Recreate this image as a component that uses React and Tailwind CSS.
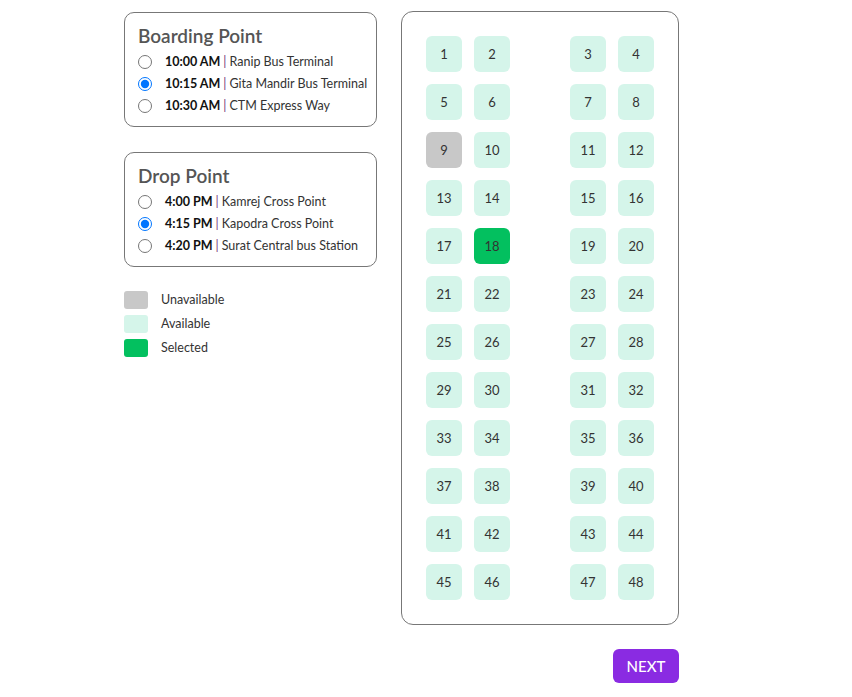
import React, { useState } from 'react';

const boarding = [
  { time: '10:00 AM', place: 'Ranip Bus Terminal' },
  { time: '10:15 AM', place: 'Gita Mandir Bus Terminal' },
  { time: '10:30 AM', place: 'CTM Express Way' },
];

const drops = [
  { time: '4:00 PM', place: 'Kamrej Cross Point' },
  { time: '4:15 PM', place: 'Kapodra Cross Point' },
  { time: '4:20 PM', place: 'Surat Central bus Station' },
];

const unavailable = [9];

const PointBox = ({ title, name, items, picked, onPick }) => (
  <div className="border border-[#777] rounded-[10px] px-[13px] pt-[10px] pb-[9px]">
    <h2 className="text-[19px] leading-[26px] font-semibold text-[#555]">{title}</h2>
    <div className="mt-[2px]">
      {items.map((it, i) => (
        <label key={i} className="flex items-center h-[22px] text-[12.5px] whitespace-nowrap cursor-pointer">
          <input
            type="radio"
            name={name}
            checked={picked === i}
            onChange={() => onPick(i)}
            className="m-0 shrink-0 w-[14px] h-[14px] accent-[#0075ff]"
          />
          <span className="ml-[13px] font-bold text-[#111]">{it.time}</span>
          <span className="mx-[3px] text-[#7a3a7a]">|</span>
          <span className="text-[#333]">{it.place}</span>
        </label>
      ))}
    </div>
  </div>
);

const Seat = ({ n, selected, onClick }) => {
  const blocked = unavailable.includes(n);
  let color = 'bg-[#d5f5ea]';
  if (blocked) color = 'bg-[#c8c8c8]';
  else if (selected) color = 'bg-[#03c05f]';
  return (
    <button
      onClick={blocked ? undefined : onClick}
      className={`w-9 h-9 pt-[2px] rounded-[6px] flex items-center justify-center text-[13px] text-[#333] ${color}`}
    >
      {n}
    </button>
  );
};

export default function App() {
  const [board, setBoard] = useState(1);
  const [drop, setDrop] = useState(1);
  const [seat, setSeat] = useState(18);

  const rows = Array.from({ length: 12 }, (_, r) => [r * 4 + 1, r * 4 + 2, r * 4 + 3, r * 4 + 4]);

  return (
    <div className="min-h-screen bg-white font-['Lato',sans-serif] text-[#333]">
      <div className="flex pl-[124px] pt-[11px]">
        {/* left side: points + legend */}
        <div className="w-[253px] pt-px">
          <PointBox title="Boarding Point" name="board" items={boarding} picked={board} onPick={setBoard} />
          <div className="mt-[25px]">
            <PointBox title="Drop Point" name="drop" items={drops} picked={drop} onPick={setDrop} />
          </div>
          <div className="mt-[24px] flex flex-col gap-[6px]">
            {[
              ['bg-[#c8c8c8]', 'Unavailable'],
              ['bg-[#d5f5ea]', 'Available'],
              ['bg-[#03c05f]', 'Selected'],
            ].map(([c, label]) => (
              <div key={label} className="flex items-center h-[18px]">
                <div className={`w-6 h-[18px] rounded-[3px] ${c}`} />
                <span className="ml-[13px] pt-px text-[12.5px] text-[#333]">{label}</span>
              </div>
            ))}
          </div>
        </div>

        {/* seat map */}
        <div className="ml-[24px] flex flex-col items-end">
          <div className="border border-[#777] rounded-[12px] p-[24px] flex flex-col gap-3">
            {rows.map((row, i) => (
              <div key={i} className="flex">
                <div className="flex gap-3">
                  <Seat n={row[0]} selected={seat === row[0]} onClick={() => setSeat(row[0])} />
                  <Seat n={row[1]} selected={seat === row[1]} onClick={() => setSeat(row[1])} />
                </div>
                <div className="flex gap-3 ml-[60px]">
                  <Seat n={row[2]} selected={seat === row[2]} onClick={() => setSeat(row[2])} />
                  <Seat n={row[3]} selected={seat === row[3]} onClick={() => setSeat(row[3])} />
                </div>
              </div>
            ))}
          </div>
          <button className="mt-[24px] w-[66px] h-[34px] rounded-[6px] bg-[#8a2be2] text-white text-[15px] font-medium">
            NEXT
          </button>
        </div>
      </div>
    </div>
  );
}
